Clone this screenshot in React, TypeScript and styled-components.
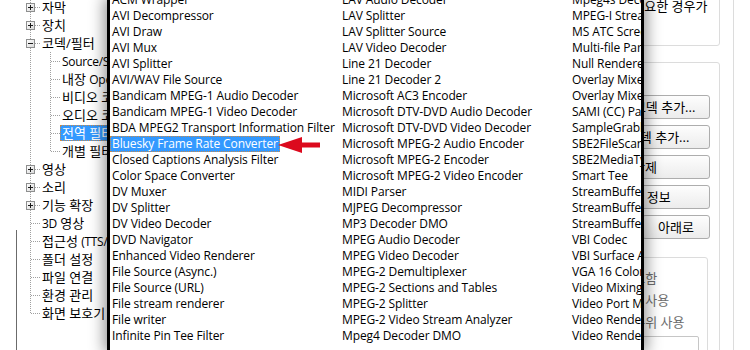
import React from "react";
import styled, { createGlobalStyle } from "styled-components";

const GlobalStyle = createGlobalStyle`
  html, body {
    margin: 0;
    padding: 0;
    background: #fff;
  }
  body {
    width: 750px;
    height: 350px;
    overflow: hidden;
    font-family: "Open Sans", "Noto Sans CJK KR", sans-serif;
    font-size: 12px;
    color: #000;
  }
`;

const Screen = styled.div`
  position: relative;
  width: 750px;
  height: 350px;
  display: flex;
  overflow: hidden;
  background: #fff;
`;

/* ---------- tree on the left ---------- */

const TreePane = styled.div`
  flex: 0 0 300px;
  display: flex;
  overflow: hidden;
`;

const Rail = styled.div`
  flex: 0 0 17px;
  background: linear-gradient(#6b6b6b, #6b6b6b) no-repeat 16px 230px / 1px 100%;
`;

const TreeList = styled.div`
  display: flex;
  flex-direction: column;
  margin-top: -2px;
  padding-left: 3px;
`;

const TreeRow = styled.div`
  display: flex;
  align-items: center;
  flex: none;
  height: 18px;
  white-space: nowrap;
`;

const TreeLabel = styled.span<{ $selected?: boolean }>`
  box-sizing: border-box;
  height: 16px;
  line-height: 14px;
  padding: 0 1px;
  font-size: 13px;
  border: 1px dotted ${(p) => (p.$selected ? "#c98a4a" : "transparent")};
  background: ${(p) => (p.$selected ? "#3399ff" : "transparent")};
  color: ${(p) => (p.$selected ? "#fff" : "#000")};
`;

const LatinRun = styled.span`
  font-size: 12px;
  letter-spacing: -0.3px;
`;

// latin parts of a korean label are set a bit smaller, like the system font does
const splitRuns = (text: string) =>
  text.split(/([A-Za-z0-9/().,]+)/).map((part, i) =>
    /[A-Za-z0-9]/.test(part) ? <LatinRun key={i}>{part}</LatinRun> : <React.Fragment key={i}>{part}</React.Fragment>
  );

type Vertical = "none" | "full" | "top";

const Connector: React.FC<{ v: Vertical; h?: boolean; box?: "plus" | "minus" }> = ({ v, h, box }) => (
  <svg width="20" height="18" viewBox="0 0 20 18" style={{ flex: "0 0 20px", display: "block" }}>
    <defs>
      <linearGradient id="boxfill" x1="0" y1="0" x2="1" y2="1">
        <stop offset="0" stopColor="#ffffff" />
        <stop offset="1" stopColor="#d8d8d8" />
      </linearGradient>
    </defs>
    {v !== "none" && (
      <line x1="10.5" y1="0" x2="10.5" y2={v === "full" ? 18 : 9} stroke="#a0a0a0" strokeDasharray="1 1" />
    )}
    {h && <line x1="11" y1="9.5" x2="20" y2="9.5" stroke="#a0a0a0" strokeDasharray="1 1" />}
    {box && (
      <g>
        <rect x="6.5" y="5.5" width="8" height="8" fill="url(#boxfill)" stroke="#8e8f8f" />
        <line x1="8" y1="9.5" x2="13" y2="9.5" stroke="#1b1b1b" />
        {box === "plus" && <line x1="10.5" y1="7" x2="10.5" y2="12" stroke="#1b1b1b" />}
      </g>
    )}
  </svg>
);

type TreeItem = {
  label: string;
  level: 1 | 2;
  box?: "plus" | "minus";
  last?: boolean;
  selected?: boolean;
};

const treeItems: TreeItem[] = [
  { label: "자막", level: 1, box: "plus" },
  { label: "장치", level: 1, box: "plus" },
  { label: "코덱/필터", level: 1, box: "minus" },
  { label: "Source/Splitter 필터", level: 2 },
  { label: "내장 OpenCodec", level: 2 },
  { label: "비디오 코덱", level: 2 },
  { label: "오디오 코덱", level: 2 },
  { label: "전역 필터 우선순위", level: 2, selected: true },
  { label: "개별 필터 우선순위", level: 2, last: true },
  { label: "영상", level: 1, box: "plus" },
  { label: "소리", level: 1, box: "plus" },
  { label: "기능 확장", level: 1, box: "plus" },
  { label: "3D 영상", level: 1 },
  { label: "접근성 (TTS/점자)", level: 1 },
  { label: "폴더 설정", level: 1 },
  { label: "파일 연결", level: 1 },
  { label: "환경 관리", level: 1 },
  { label: "화면 보호기", level: 1, last: true },
];

/* ---------- settings on the right ---------- */

const RightPane = styled.div`
  flex: 1;
  display: flex;
  justify-content: flex-end;
`;

const SettingsColumn = styled.div`
  flex: none;
  width: 150px;
  display: flex;
  flex-direction: column;
  margin-top: -30px;
  font-size: 13px;
`;

const GroupBox = styled.div`
  flex: none;
  box-sizing: border-box;
  border: 1px solid #dcdcdc;
  border-radius: 3px;
`;

const NoteGroup = styled(GroupBox)`
  height: 76px;
  padding: 27px 0 0 22px;
  line-height: 16px;
  white-space: nowrap;
`;

const FilterGroup = styled(GroupBox)`
  margin-top: 16px;
  height: 420px;
  padding: 32px 9px 0 9px;
`;

const ButtonStack = styled.div`
  display: flex;
  flex-direction: column;
  gap: 6px;
`;

const ButtonRow = styled.div`
  display: flex;
  gap: 6px;
`;

const PushButton = styled.button`
  flex: 1 0 auto;
  box-sizing: border-box;
  height: 24px;
  padding: 0;
  border: 1px solid #adadad;
  border-radius: 3px;
  background: linear-gradient(#fdfdfd, #ececec);
  font-family: inherit;
  font-size: 13px;
  line-height: 22px;
  color: #000;
  white-space: nowrap;
  overflow: hidden;
`;

const OptionGroup = styled(GroupBox)`
  margin: 18px 2px 0 0;
  padding: 9px 0 0 25px;
  height: 200px;
`;

const OptionLabel = styled.div`
  height: 22px;
  line-height: 22px;
  color: #6d6d6d;
  white-space: nowrap;
`;

const InnerBox = styled.div`
  margin: 3px 8px 0 -16px;
  height: 40px;
  border: 1px solid #c6c6c6;
  border-radius: 2px;
`;

const Divider = styled.div`
  flex: 0 0 1px;
  margin-left: 13px;
  background: #dcdcdc;
`;

const Edge = styled.div`
  flex: 0 0 16px;
`;

/* ---------- the filter list popup ---------- */

const Popup = styled.div`
  position: absolute;
  left: 107px;
  top: 0;
  width: 537px;
  height: 350px;
  box-sizing: border-box;
  border-left: 3px solid #000;
  border-right: 3px solid #000;
  background: #fff;
  overflow: hidden;
  box-shadow: 0 0 14px 3px rgba(0, 0, 0, 0.42);
`;

const FilterGrid = styled.div`
  display: grid;
  grid-auto-flow: column;
  grid-template-rows: repeat(22, 16px);
  grid-template-columns: 230px 230px 230px;
  margin-top: -8px;
`;

const FilterItem = styled.div<{ $selected?: boolean }>`
  justify-self: start;
  box-sizing: border-box;
  height: 16px;
  line-height: 14px;
  padding: 0 1px;
  border: 1px dotted ${(p) => (p.$selected ? "#c98a4a" : "transparent")};
  background: ${(p) => (p.$selected ? "#3399ff" : "transparent")};
  color: ${(p) => (p.$selected ? "#fff" : "#000")};
  white-space: nowrap;
  letter-spacing: -0.1px;
`;

const Arrow = styled.svg`
  position: absolute;
  left: 276px;
  top: 136px;
`;

const filters = [
  "ACM Wrapper",
  "AVI Decompressor",
  "AVI Draw",
  "AVI Mux",
  "AVI Splitter",
  "AVI/WAV File Source",
  "Bandicam MPEG-1 Audio Decoder",
  "Bandicam MPEG-1 Video Decoder",
  "BDA MPEG2 Transport Information Filter",
  "Bluesky Frame Rate Converter",
  "Closed Captions Analysis Filter",
  "Color Space Converter",
  "DV Muxer",
  "DV Splitter",
  "DV Video Decoder",
  "DVD Navigator",
  "Enhanced Video Renderer",
  "File Source (Async.)",
  "File Source (URL)",
  "File stream renderer",
  "File writer",
  "Infinite Pin Tee Filter",
  "LAV Audio Decoder",
  "LAV Splitter",
  "LAV Splitter Source",
  "LAV Video Decoder",
  "Line 21 Decoder",
  "Line 21 Decoder 2",
  "Microsoft AC3 Encoder",
  "Microsoft DTV-DVD Audio Decoder",
  "Microsoft DTV-DVD Video Decoder",
  "Microsoft MPEG-2 Audio Encoder",
  "Microsoft MPEG-2 Encoder",
  "Microsoft MPEG-2 Video Encoder",
  "MIDI Parser",
  "MJPEG Decompressor",
  "MP3 Decoder DMO",
  "MPEG Audio Decoder",
  "MPEG Video Decoder",
  "MPEG-2 Demultiplexer",
  "MPEG-2 Sections and Tables",
  "MPEG-2 Splitter",
  "MPEG-2 Video Stream Analyzer",
  "Mpeg4 Decoder DMO",
  "Mpeg4s Decoder DMO",
  "MPEG-I Stream Splitter",
  "MS ATC Screen Decoder 1",
  "Multi-file Parser",
  "Null Renderer",
  "Overlay Mixer",
  "Overlay Mixer2",
  "SAMI (CC) Parser",
  "SampleGrabber",
  "SBE2FileScan",
  "SBE2MediaTypeProfile",
  "Smart Tee",
  "StreamBufferSink",
  "StreamBufferSink2",
  "StreamBufferSource",
  "VBI Codec",
  "VBI Surface Allocator",
  "VGA 16 Color Ditherer",
  "Video Mixing Renderer 9",
  "Video Port Manager",
  "Video Renderer",
  "Video Renderer",
];

const App: React.FC = () => {
  return (
    <>
      <GlobalStyle />
      <Screen>
        <TreePane>
          <Rail />
          <TreeList>
            {treeItems.map((item, i) => (
              <TreeRow key={i}>
                {item.level === 1 ? (
                  <Connector v={item.last ? "top" : "full"} h box={item.box} />
                ) : (
                  <>
                    <Connector v="full" />
                    <Connector v={item.last ? "top" : "full"} h />
                  </>
                )}
                <TreeLabel $selected={item.selected}>{splitRuns(item.label)}</TreeLabel>
              </TreeRow>
            ))}
          </TreeList>
        </TreePane>

        <RightPane>
          <SettingsColumn>
            <NoteGroup>코덱이 필요한 경우가</NoteGroup>
            <FilterGroup>
              <ButtonStack>
                <PushButton>시스템 코덱 추가...</PushButton>
                <PushButton>외부 코덱 추가...</PushButton>
                <PushButton>삭제</PushButton>
                <PushButton>필터 정보</PushButton>
                <ButtonRow>
                  <PushButton>위로</PushButton>
                  <PushButton>아래로</PushButton>
                </ButtonRow>
              </ButtonStack>
              <OptionGroup>
                <OptionLabel>자막 포함</OptionLabel>
                <OptionLabel>기본값 사용</OptionLabel>
                <OptionLabel>우선 순위 사용</OptionLabel>
                <InnerBox />
              </OptionGroup>
            </FilterGroup>
          </SettingsColumn>
          <Divider />
          <Edge />
        </RightPane>

        <Popup>
          <FilterGrid>
            {filters.map((name, i) => (
              <FilterItem key={i} $selected={name === "Bluesky Frame Rate Converter"}>
                {name}
              </FilterItem>
            ))}
          </FilterGrid>
        </Popup>

        <Arrow width="46" height="18" viewBox="0 0 46 18">
          <polygon points="2,9 26,1 26,6.5 44,6.5 44,11.5 26,11.5 26,17" fill="#dc0a1e" />
        </Arrow>
      </Screen>
    </>
  );
};

export default App;
